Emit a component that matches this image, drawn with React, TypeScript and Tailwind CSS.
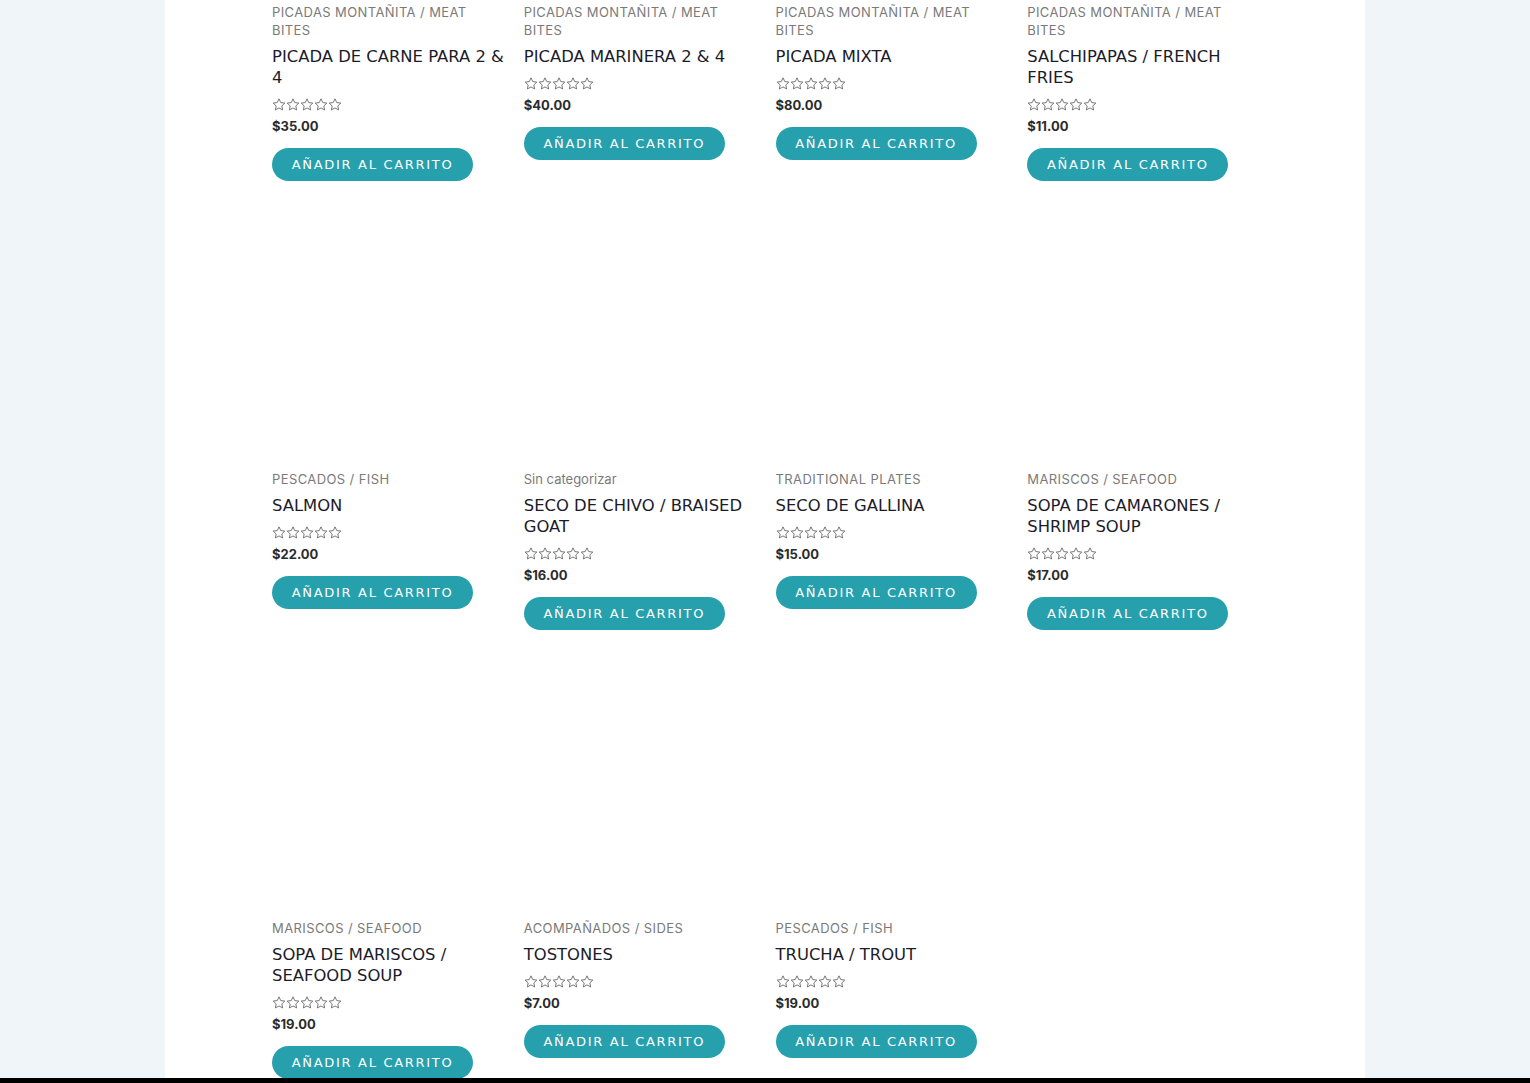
import React from "react";

type Product = {
  category: string;
  title: string[];
  price: string;
  plainCategory?: boolean;
};

const PRODUCTS: Product[] = [
  { category: "Picadas Montañita / Meat Bites", title: ["PICADA DE CARNE PARA 2 &", "4"], price: "$35.00" },
  { category: "Picadas Montañita / Meat Bites", title: ["PICADA MARINERA 2 & 4"], price: "$40.00" },
  { category: "Picadas Montañita / Meat Bites", title: ["PICADA MIXTA"], price: "$80.00" },
  { category: "Picadas Montañita / Meat Bites", title: ["SALCHIPAPAS / FRENCH", "FRIES"], price: "$11.00" },
  { category: "Pescados / Fish", title: ["SALMON"], price: "$22.00" },
  { category: "Sin categorizar", title: ["SECO DE CHIVO / BRAISED", "GOAT"], price: "$16.00", plainCategory: true },
  { category: "Traditional Plates", title: ["SECO DE GALLINA"], price: "$15.00" },
  { category: "Mariscos / Seafood", title: ["SOPA DE CAMARONES /", "SHRIMP SOUP"], price: "$17.00" },
  { category: "Mariscos / Seafood", title: ["SOPA DE MARISCOS /", "SEAFOOD SOUP"], price: "$19.00" },
  { category: "Acompañados / Sides", title: ["TOSTONES"], price: "$7.00" },
  { category: "Pescados / Fish", title: ["TRUCHA / TROUT"], price: "$19.00" },
];

function Star() {
  return (
    <svg width="14" height="13" viewBox="0 0 24 23" fill="none" stroke="#555" strokeWidth="1.4" strokeLinejoin="round">
      <path d="M12 1.5l3.1 6.6 7.2.9-5.3 5 1.4 7.1L12 17.6l-6.4 3.5 1.4-7.1-5.3-5 7.2-.9z" />
    </svg>
  );
}

function ProductCard({ product }: { product: Product }) {
  return (
    <li className="flex flex-col">
      {/* image placeholder (not loaded yet) */}
      <div className="h-[232px] w-full bg-white" />
      <div
        className={`mt-3 text-[13px] leading-[18px] text-[#7a7a7a] ${
          product.plainCategory ? "" : "uppercase tracking-[0.4px]"
        }`}
        style={{ fontFamily: "Inter, 'Open Sans', sans-serif" }}
      >
        {product.category}
      </div>
      <h2
        className="mt-[7px] text-[16.4px] leading-[21px] text-[#1b1b2a] font-normal"
        style={{ fontFamily: "'DejaVu Sans', sans-serif" }}
      >
        {product.title.map((line) => (
          <span key={line} className="block whitespace-nowrap">
            {line}
          </span>
        ))}
      </h2>
      <div className="mt-[9px] flex h-[14px] items-center">
        {[0, 1, 2, 3, 4].map((i) => (
          <Star key={i} />
        ))}
      </div>
      <div
        className="mt-[5px] text-[13px] leading-[20px] font-bold text-[#2b2b2b]"
        style={{ fontFamily: "Inter, sans-serif" }}
      >
        {product.price}
      </div>
      <div className="mt-3">
        <button
          className="h-[33px] w-[201px] rounded-full bg-[#27a0ae] text-[13px] font-medium uppercase tracking-[1.7px] text-white"
          style={{ fontFamily: "'DejaVu Sans', sans-serif" }}
        >
          Añadir al carrito
        </button>
      </div>
    </li>
  );
}

export default function App() {
  return (
    <div className="flex h-[1083px] flex-col overflow-hidden bg-[#f0f5f9]">
      <div className="flex-1 overflow-hidden">
        <main className="ml-[165px] h-full w-[1200px] overflow-hidden bg-white pl-[107px]">
          <ul className="-mt-[241px] grid w-[987px] grid-cols-4 gap-x-5 gap-y-[45px]">
            {PRODUCTS.map((p, i) => (
              <ProductCard key={i} product={p} />
            ))}
          </ul>
        </main>
      </div>
      <div className="h-[5px] bg-black" />
    </div>
  );
}
